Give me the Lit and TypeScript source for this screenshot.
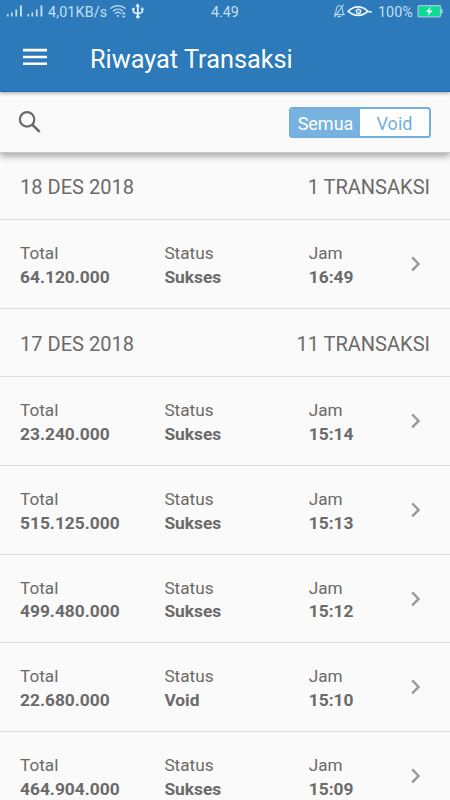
import { LitElement, html, svg, css } from "lit";
import { customElement, property } from "lit/decorators.js";

interface Transaction {
  total: string;
  status: string;
  time: string;
}

interface Day {
  date: string;
  count: number;
  items: Transaction[];
}

const days: Day[] = [
  { date: "18 DES 2018", count: 1, items: [{ total: "64.120.000", status: "Sukses", time: "16:49" }] },
  {
    date: "17 DES 2018",
    count: 11,
    items: [
      { total: "23.240.000", status: "Sukses", time: "15:14" },
      { total: "515.125.000", status: "Sukses", time: "15:13" },
      { total: "499.480.000", status: "Sukses", time: "15:12" },
      { total: "22.680.000", status: "Void", time: "15:10" },
      { total: "464.904.000", status: "Sukses", time: "15:09" },
    ],
  },
];

@customElement("status-bar")
class StatusBar extends LitElement {
  static styles = css`
    :host { display: flex; height: 23px; align-items: center; color: #c6dff3; font-size: 14.3px; line-height: 23px; }
    svg { display: block; flex: none; }
    span { padding-top: 1px; }
    .left, .right { display: flex; align-items: center; }
    .left { width: 211px; padding-left: 6px; box-sizing: border-box; }
    .speed { width: 61px; white-space: nowrap; letter-spacing: 0.15px; }
    .time { flex: 1; }
    .right { padding-right: 7px; }
    .percent { width: 42px; padding-left: 3px; box-sizing: border-box; white-space: nowrap; font-size: 14.4px; }
  `;

  render() {
    const bars = svg`
      <rect x="1" y="14" width="1.6" height="2.5"/><rect x="5" y="12.5" width="1.6" height="4"/>
      <rect x="9.4" y="9.5" width="1.7" height="7"/><rect x="14" y="5.5" width="1.9" height="11"/>`;
    return html`
      <div class="left">
        <svg width="42" height="23" viewBox="0 0 42 23" fill="#c6dff3">
          ${bars}<g transform="translate(20.5 0)">${bars}</g>
        </svg>
        <span class="speed">4,01KB/s</span>
        <svg width="38" height="23" viewBox="0 0 38 23" fill="none" stroke="#c6dff3" stroke-width="1.3" stroke-linecap="round">
          <path d="M1.8 8.3c4-3.6 10.2-3.6 14.2 0M4.3 10.9c2.7-2.4 6.5-2.4 9.2 0M6.3 13.4c1.5-1.4 3.7-1.4 5.2 0"/>
          <circle cx="8.9" cy="16" r="1" fill="#c6dff3" stroke="none"/>
          <path d="M13.6 13.8l1.1-1.2 1.1 1.2M13.6 16l1.1 1.2 1.1-1.2" stroke-width="1.1"/>
          <g stroke="#e4f3ff" stroke-width="1.7">
            <path d="M28.8 6.5V16M24.3 9.5V11q0 2.2 4.5 2.6M33.4 9.5V11q0 2.2-4.6 2.6"/>
            <path d="M28.8 4l1.5 2.4h-3z" fill="#e4f3ff" stroke-width=".8"/>
            <circle cx="28.8" cy="16.8" r="1.4" fill="#e4f3ff" stroke-width=".8"/>
            <circle cx="24.3" cy="9" r=".9" fill="#e4f3ff" stroke-width=".8"/>
            <path d="M32.6 8h1.6v1.5h-1.6z" stroke-width=".8"/>
          </g>
        </svg>
      </div>
      <span class="time">4.49</span>
      <div class="right">
        <svg width="41" height="23" viewBox="0 0 41 23" fill="none">
          <g stroke="#b5d5ee" stroke-width="1.1" stroke-linecap="round" stroke-linejoin="round" transform="translate(-1.5 0)">
            <path d="M.7 14.6h10.2c-1.5-1.3-1.7-2.4-1.8-4.2 0-3-1-4.6-3.1-4.6S2.8 7.6 2.8 10.4c0 2-.5 3-2.1 4.2zM4.5 16.6H7M1.2 16.8L10.1 5" transform="translate(.9 0)"/>
          </g>
          <path d="M14.3 11.4C19.8 5.4 28.3 5.4 33.8 11.4 27.8 16.8 20.3 16.8 14.3 11.4z" stroke="#f0f8ff" stroke-width="1.8"/>
          <path d="M32.8 11.2l4.4.8" stroke="#f0f8ff" stroke-width="1.6" stroke-linecap="round"/>
          <circle cx="24.5" cy="11.3" r="2.2" stroke="#e4f3ff" stroke-width="1.3"/>
          <circle cx="24.8" cy="11.2" r=".7" fill="#e4f3ff"/>
        </svg>
        <span class="percent">100%</span>
        <svg width="26" height="23" viewBox="0 0 26 23">
          <rect x="1.1" y="5.6" width="22.4" height="11.2" rx="1" fill="#0bdc94" stroke="#a5c4dc" stroke-width="1.3"/>
          <rect x="24.2" y="9" width="1.2" height="4.6" fill="#c6dff3"/>
          <path d="M13.8 6.6L8.7 12h3.1l-1.2 4 5.2-5.6h-3.2z" fill="#e8fff4"/>
        </svg>
      </div>`;
  }
}

@customElement("transaction-row")
class TransactionRow extends LitElement {
  @property({ attribute: false }) item!: Transaction;

  static styles = css`
    :host {
      display: grid; grid-template-columns: 144.4px 144.4px 1fr 24px; align-items: center;
      height: 88.8px; box-sizing: border-box; padding: 0 22px 0 20px;
      border-bottom: 1px solid #dedede; font-size: 17.2px; line-height: 23.8px; color: #6a6a6a;
    }
    .field { padding-top: 3.6px; }
    .value { font-weight: 700; font-size: 17.35px; }
    svg { display: block; }
  `;

  private field(label: string, value: string) {
    return html`<div class="field"><div>${label}</div><div class="value">${value}</div></div>`;
  }

  render() {
    return html`
      ${this.field("Total", this.item.total)}
      ${this.field("Status", this.item.status)}
      ${this.field("Jam", this.item.time)}
      <svg width="24" height="24" viewBox="0 0 24 24" fill="none" stroke="#989898" stroke-width="2.3">
        <path d="M8.2 5.4l6.4 6.5-6.4 6.5"/>
      </svg>`;
  }
}

@customElement("app-root")
class AppRoot extends LitElement {
  static styles = css`
    :host {
      display: flex; flex-direction: column; width: 450px; height: 800px; overflow: hidden;
      background: #fafafa; font-family: Roboto, "Liberation Sans", sans-serif; color: #6a6a6a;
    }
    svg { display: block; flex: none; }
    .appbar {
      position: relative; z-index: 2; flex: none; height: 92px; box-sizing: border-box;
      background: #2c7aba; border-bottom: 1px solid #1a6db2; box-shadow: 0 1px 4px rgba(0, 0, 0, 0.36);
    }
    .titlebar { display: flex; align-items: center; height: 69px; padding: 0 23px; color: #fff; }
    .menu { margin-bottom: 2px; }
    .title { margin: 4px 0 0 43px; font-size: 25.3px; font-weight: 400; line-height: 32px; white-space: nowrap; }
    .filterbar {
      position: relative; z-index: 1; flex: none; display: flex; align-items: center; justify-content: space-between;
      height: 61px; box-sizing: border-box; padding: 0 19px 0 18px; background: #fafafa;
      border-bottom: 1px solid #cacaca; box-shadow: 0 3px 7px rgba(0, 0, 0, 0.36);
    }
    .toggle {
      display: grid; grid-template-columns: 69px 1fr; width: 142px; height: 31px; box-sizing: border-box;
      border: 2px solid #70afde; border-radius: 3.5px; overflow: hidden; background: #fff;
      font-size: 18px; line-height: 29.5px; text-align: center;
    }
    .on { background: #78b3e0; color: #fff; }
    .off { color: #70afde; }
    .list { flex: 1; min-height: 0; margin-top: -0.5px; overflow: hidden; }
    .day {
      display: flex; justify-content: space-between; align-items: center; height: 67.9px; box-sizing: border-box;
      padding: 2.3px 20px 0; border-bottom: 1.5px solid #dedede; font-size: 20.05px; line-height: 24px;
    }
  `;

  render() {
    return html`
      <header class="appbar">
        <status-bar></status-bar>
        <div class="titlebar">
          <svg class="menu" width="24" height="18" viewBox="0 0 24 18" fill="#fff">
            <path d="M0 .8h24v2.6H0zM0 7.7h24v2.6H0zM0 14.5h24v2.6H0z"/>
          </svg>
          <h1 class="title">Riwayat Transaksi</h1>
        </div>
      </header>
      <div class="filterbar">
        <svg width="24" height="24" viewBox="0 0 24 24" fill="none" stroke="#686868" stroke-width="2.2">
          <circle cx="9.1" cy="9.4" r="7.2"/><path d="M14.2 14.6l7.5 7.3" stroke-width="2.7"/>
        </svg>
        <div class="toggle"><span class="on">Semua</span><span class="off">Void</span></div>
      </div>
      <main class="list">
        ${days.map(
          (day) => html`
            <div class="day"><span>${day.date}</span><span>${day.count} TRANSAKSI</span></div>
            ${day.items.map((item) => html`<transaction-row .item=${item}></transaction-row>`)}
          `
        )}
      </main>`;
  }
}
